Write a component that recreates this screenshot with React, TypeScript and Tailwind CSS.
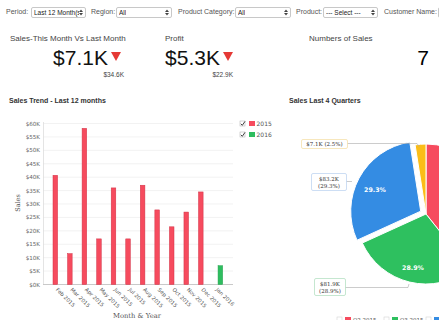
import React from "react";

const SANS = "font-['Liberation_Sans',Arial,sans-serif]";

function SelectBox({ w, text }: { w: string; text: string }) {
  return (
    <div
      className={`${w} h-[11px] flex items-center justify-between border border-[#c8c8c8] rounded-[2px] bg-white pl-[2px] pr-[2px] text-[6.5px] text-[#222] overflow-hidden shrink-0`}
    >
      <span className="whitespace-nowrap overflow-hidden">{text}</span>
      <svg width="4" height="7" viewBox="0 0 4 7" className="shrink-0">
        <polygon points="0,3 4,3 2,0.5" fill="#444" />
        <polygon points="0,4 4,4 2,6.5" fill="#444" />
      </svg>
    </div>
  );
}

function Down() {
  return (
    <svg width="10" height="9" viewBox="0 0 10 9" className="mt-[5px] shrink-0">
      <polygon points="0,0 10,0 5,9" fill="#e53935" />
    </svg>
  );
}

const months = [
  ["Feb 2015", 40.7],
  ["Mar 2015", 11.5],
  ["Apr 2015", 58.2],
  ["May 2015", 17],
  ["Jun 2015", 36],
  ["Jul 2015", 17],
  ["Aug 2015", 37],
  ["Sep 2015", 27.8],
  ["Oct 2015", 21.5],
  ["Nov 2015", 27],
  ["Dec 2015", 34.5],
  ["Jan 2016", 7],
] as const;

const yOf = (v: number) => 284.5 - v * 2.683;

function BarChart() {
  const ticks = Array.from({ length: 13 }, (_, i) => i * 5);
  return (
    <svg width="280" height="215" viewBox="0 105 280 215" className="block">
      {ticks.map((t) => (
        <g key={t}>
          {t > 0 && (
            <line x1="43" x2="233" y1={yOf(t)} y2={yOf(t)} stroke="#ececec" strokeWidth="0.7" />
          )}
          <text
            x="40"
            y={yOf(t) + 2}
            textAnchor="end"
            fontSize="5.6"
            fill="#666"
            fontFamily="DejaVu Sans, sans-serif"
          >
            ${t}K
          </text>
        </g>
      ))}
      <line x1="43.5" x2="43.5" y1="122" y2="284.5" stroke="#ddd" strokeWidth="0.8" />
      <line x1="43" x2="233" y1="284.5" y2="284.5" stroke="#bbb" strokeWidth="0.8" />
      {months.map(([label, v], i) => {
        const left = 53 + i * 14.55;
        const isGreen = i === 11;
        const x = isGreen ? left + 5 : left;
        const y = yOf(v);
        return (
          <g key={label}>
            <rect
              x={x}
              y={y}
              width="4.6"
              height={284.5 - y}
              fill={isGreen ? "#2ebd5f" : "#f64b5e"}
              stroke={isGreen ? "#22a04d" : "#d23246"}
              strokeWidth="0.5"
            />
            <text
              x={left + 2.5}
              y="290"
              fontSize="5.3"
              fill="#555"
              fontFamily="DejaVu Sans, sans-serif"
              transform={`rotate(45 ${left + 2.5} 290)`}
            >
              {label}
            </text>
          </g>
        );
      })}
      <text
        x="20"
        y="203"
        textAnchor="middle"
        fontSize="6.5"
        fill="#555"
        fontFamily="DejaVu Serif, serif"
        transform="rotate(-90 20 203)"
      >
        Sales
      </text>
      <text
        x="137"
        y="317.5"
        textAnchor="middle"
        fontSize="6.8"
        fill="#555"
        fontFamily="DejaVu Serif, serif"
      >
        Month &amp; Year
      </text>
      {[
        ["2015", "#f64b5e", 121],
        ["2016", "#2ebd5f", 132],
      ].map(([t, c, y]) => (
        <g key={t as string}>
          <rect x="240" y={y as number} width="5" height="5" fill="white" stroke="#aaa" strokeWidth="0.5" />
          <path
            d={`M240.8 ${(y as number) + 2.8} L242.3 ${(y as number) + 4.3} L245 ${(y as number) + 0.4}`}
            stroke="#111"
            strokeWidth="0.8"
            fill="none"
          />
          <rect x="249" y={y as number} width="6" height="5" fill={c as string} />
          <text
            x="256.5"
            y={(y as number) + 4.6}
            fontSize="6"
            fill="#555"
            fontFamily="DejaVu Sans, sans-serif"
          >
            {t}
          </text>
        </g>
      ))}
    </svg>
  );
}

function PieChart() {
  return (
    <svg width="159" height="215" viewBox="280 105 159 215" className="block">
      <path d="M426,214 L426,144 A70,70 0 0 1 469.6,268.8 Z" fill="#f64b5e" stroke="white" strokeWidth="1" />
      <path d="M426,214 L469.6,268.8 A70,70 0 0 1 362.3,243 Z" fill="#2ec05f" stroke="white" strokeWidth="1" />
      <path d="M420.7,211.2 L357,240.2 A70,70 0 0 1 409.8,142.1 Z" fill="#348ce3" stroke="white" strokeWidth="1" />
      <path d="M426,214 L415.1,144.9 A70,70 0 0 1 426,144 Z" fill="#fbbd17" stroke="white" strokeWidth="1" />

      <text x="375" y="191.5" textAnchor="middle" fontSize="6.3" fontWeight="bold" fill="white" fontFamily="DejaVu Sans, sans-serif">
        29.3%
      </text>
      <text x="413" y="269.5" textAnchor="middle" fontSize="6.3" fontWeight="bold" fill="white" fontFamily="DejaVu Sans, sans-serif">
        28.9%
      </text>

      <polyline points="347,143.5 417,143.5 419.5,147" fill="none" stroke="#aaa" strokeWidth="0.6" />
      <polyline points="346,181.5 352,181.5" fill="none" stroke="#aaa" strokeWidth="0.6" />
      <polyline points="345,287.5 408,287.5 409,284" fill="none" stroke="#aaa" strokeWidth="0.6" />

      <rect x="301.5" y="139.5" width="46" height="9" rx="1.5" fill="white" stroke="#f3dca0" strokeWidth="0.7" />
      <text x="324.5" y="146" textAnchor="middle" fontSize="5.5" fill="#333" fontFamily="DejaVu Serif, serif">
        $7.1K (2.5%)
      </text>

      <rect x="311.5" y="173.5" width="35" height="17" rx="1.5" fill="white" stroke="#b7d0ef" strokeWidth="0.7" />
      <text x="329" y="180.5" textAnchor="middle" fontSize="5.5" fill="#333" fontFamily="DejaVu Serif, serif">
        $83.2K
      </text>
      <text x="329" y="187.5" textAnchor="middle" fontSize="5.5" fill="#333" fontFamily="DejaVu Serif, serif">
        (29.3%)
      </text>

      <rect x="314.5" y="278.5" width="31" height="17" rx="1.5" fill="white" stroke="#acdcbb" strokeWidth="0.7" />
      <text x="330" y="285.5" textAnchor="middle" fontSize="5.5" fill="#333" fontFamily="DejaVu Serif, serif">
        $81.9K
      </text>
      <text x="330" y="292.5" textAnchor="middle" fontSize="5.5" fill="#333" fontFamily="DejaVu Serif, serif">
        (28.9%)
      </text>

      {[
        [337, "#f64b5e", "Q2 2015"],
        [384, "#2ec05f", "Q3 2015"],
        [426, "#348ce3", "Q4 2015"],
      ].map(([x, c, t]) => (
        <g key={t as string}>
          <rect x={x as number} y="317" width="5" height="5" fill="white" stroke="#ccc" strokeWidth="0.5" />
          <rect x={(x as number) + 8} y="317" width="6" height="5" fill={c as string} />
          <text x={(x as number) + 16} y="321.5" fontSize="5.5" fill="#555" fontFamily="DejaVu Sans, sans-serif">
            {t}
          </text>
        </g>
      ))}
    </svg>
  );
}

export default function App() {
  return (
    <div className={`w-[439px] h-[320px] overflow-hidden bg-white ${SANS}`}>
      {/* Filter bar */}
      <div className="flex items-center h-[25px] pl-[6px] text-[7px] text-[#555] whitespace-nowrap overflow-hidden">
        <span className="w-[25px] shrink-0">Period:</span>
        <SelectBox w="w-[55px]" text="Last 12 Month(s)" />
        <span className="ml-[5px] w-[25px] shrink-0">Region:</span>
        <SelectBox w="w-[56px]" text="All" />
        <span className="ml-[6px] w-[57px] shrink-0">Product Category:</span>
        <SelectBox w="w-[56px]" text="All" />
        <span className="ml-[5px] w-[27px] shrink-0">Product:</span>
        <SelectBox w="w-[55px]" text="--- Select ---" />
        <span className="ml-[6px] w-[54px] shrink-0">Customer Name:</span>
        <div className="w-[40px] h-[11px] border border-[#c8c8c8] rounded-[2px] bg-white shrink-0" />
      </div>

      {/* KPI row */}
      <div className="flex h-[67px] pt-[9px]">
        <div className="ml-[10px] w-[114px] flex flex-col">
          <div className="text-[8px] leading-[10px] text-[#444] whitespace-nowrap">
            Sales-This Month Vs Last Month
          </div>
          <div className="mt-[3px] flex justify-end items-start gap-[3px] pr-[3px]">
            <span className="text-[21px] leading-[21px] text-[#111]">$7.1K</span>
            <Down />
          </div>
          <div className="mt-[3px] text-[6.5px] leading-[8px] text-[#444] text-right">$34.6K</div>
        </div>

        <div className="ml-[41px] w-[68px] flex flex-col">
          <div className="text-[8px] leading-[10px] text-[#444] whitespace-nowrap">Profit</div>
          <div className="mt-[3px] flex justify-end items-start gap-[3px]">
            <span className="text-[21px] leading-[21px] text-[#111]">$5.3K</span>
            <Down />
          </div>
          <div className="mt-[3px] text-[6.5px] leading-[8px] text-[#444] text-right">$22.9K</div>
        </div>

        <div className="ml-[76px] w-[120px] flex flex-col">
          <div className="text-[8px] leading-[10px] text-[#444] whitespace-nowrap">Numbers of Sales</div>
          <div className="mt-[3px] text-right text-[21px] leading-[21px] text-[#000]">7</div>
        </div>
      </div>

      {/* Charts */}
      <div className="flex">
        <div className="w-[280px] shrink-0">
          <div className="pl-[9px] pt-[5px] text-[7px] leading-[8px] font-bold text-[#333]">
            Sales Trend - Last 12 months
          </div>
          <BarChart />
        </div>
        <div className="w-[159px] shrink-0 overflow-hidden">
          <div className="pl-[9px] pt-[5px] text-[7px] leading-[8px] font-bold text-[#333]">
            Sales Last 4 Quarters
          </div>
          <PieChart />
        </div>
      </div>
    </div>
  );
}
